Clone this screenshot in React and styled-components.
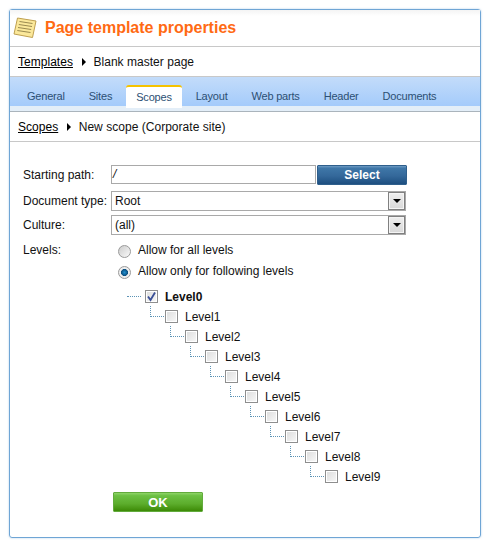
import React from 'react';
import styled, { createGlobalStyle } from 'styled-components';

const GlobalStyle = createGlobalStyle`
  html, body {
    margin: 0;
    padding: 0;
    background: #fff;
  }
  body {
    font-family: "Liberation Sans", Arial, sans-serif;
    font-size: 12px;
    color: #111;
  }
`;

const Page = styled.div`
  width: 490px;
  height: 547px;
  padding: 9px;
  box-sizing: border-box;
`;

const Frame = styled.div`
  width: 472px;
  height: 529px;
  box-sizing: border-box;
  border: 1px solid #6fa5d5;
  border-radius: 3px;
  box-shadow: 0 0 2px rgba(111, 165, 213, 0.6);
  display: flex;
  flex-direction: column;
`;

const TitleBar = styled.div`
  height: 37px;
  box-sizing: border-box;
  display: flex;
  align-items: center;
  gap: 8px;
  padding-left: 3px;
  border-bottom: 1px solid #c8c8c8;
  background: linear-gradient(#f4f4f4 0, #fff 6px);
`;

const Title = styled.h1`
  margin: 0;
  font-size: 16px;
  font-weight: bold;
  color: #ff6a13;
`;

const Crumbs = styled.div`
  height: 30px;
  box-sizing: border-box;
  display: flex;
  align-items: center;
  padding-left: 8px;
  font-size: 12px;
  letter-spacing: 0.03px;
  border-bottom: 1px solid #c8c8c8;
`;

const CrumbLink = styled.a`
  color: #000;
  text-decoration: underline;
`;

const CrumbArrow = styled.span`
  width: 0;
  height: 0;
  margin: 0 7.5px 0 9px;
  border-left: 4px solid #000;
  border-top: 4px solid transparent;
  border-bottom: 4px solid transparent;
`;

const TabBar = styled.div`
  height: 35px;
  box-sizing: border-box;
  border-bottom: 1px solid #aab4bc;
  background: linear-gradient(#e3eef8, #e3eef8) bottom / 100% 5px no-repeat,
    linear-gradient(#c3dcfa, #a4cbfb) top / 100% 29px no-repeat;
  display: flex;
  align-items: flex-start;
  padding: 8px 0 0 5px;
`;

const Tab = styled.div`
  height: 23px;
  box-sizing: border-box;
  padding: 0 ${p => (p.$active ? 10 : 12)}px 2px;
  margin: 0 ${p => (p.$active ? 2 : 0)}px;
  display: flex;
  align-items: center;
  font-size: 11px;
  letter-spacing: -0.2px;
  color: #2c4f73;
  ${p => p.$active && `
    background: #fff;
    border-top: 2px solid #f5c200;
    border-radius: 3px 3px 0 0;
  `}
`;

const Form = styled.div`
  padding: 23px 0 0 13px;
  flex: 1;
  display: flex;
  flex-direction: column;
`;

const Row = styled.div`
  display: flex;
  align-items: flex-start;
  margin-bottom: ${p => p.$gap ?? 4}px;
`;

const Label = styled.label`
  width: 88px;
  flex: none;
  line-height: ${p => p.$line ?? 20}px;
  font-size: 12px;
`;

const TextBox = styled.div`
  width: 205px;
  height: 19px;
  box-sizing: border-box;
  border: 1px solid #a9a9a9;
  padding-left: 1px;
  line-height: 17px;
  font-size: 12px;
  font-style: italic;
`;

const SelectButton = styled.button`
  width: 90px;
  height: 20px;
  margin-left: 1px;
  padding: 0;
  border: 1px solid #2f5f8c;
  border-radius: 1px;
  background: linear-gradient(#6f9cc4 0, #3f77a8 12%, #34689a 55%, #1d4f80 100%);
  color: #fff;
  font: bold 12px "Liberation Sans", Arial, sans-serif;
`;

const Dropdown = styled.div`
  width: 295px;
  height: 20px;
  box-sizing: border-box;
  border: 1px solid #a9a9a9;
  padding-left: 3px;
  display: flex;
  align-items: center;
  justify-content: space-between;
  font-size: 12px;
`;

const DropButton = styled.span`
  width: 17px;
  height: 18px;
  box-sizing: border-box;
  border: 1px solid #808080;
  box-shadow: inset 0 0 0 1px #f4f4f4;
  background: linear-gradient(#eeeeee, #d8d8d8);
  display: flex;
  align-items: center;
  justify-content: center;
  &::after {
    content: "";
    border-top: 4px solid #000;
    border-left: 4px solid transparent;
    border-right: 4px solid transparent;
  }
`;

const RadioGroup = styled.div`
  display: flex;
  flex-direction: column;
  gap: 7px;
  padding: 5px 0 0 7px;
`;

const RadioRow = styled.div`
  display: flex;
  align-items: center;
  gap: 7px;
  height: 14px;
  & > span:last-child {
    margin-top: -2px;
  }
`;

const RadioDot = styled.span`
  width: 13px;
  height: 13px;
  box-sizing: border-box;
  border-radius: 50%;
  border: 1px solid #9a9a9a;
  background: ${p => (p.$on
    ? 'radial-gradient(circle, #1f8fd0 0, #0b4f80 3.2px, #eeeeee 3.8px)'
    : 'linear-gradient(135deg, #cccccc, #fafafa)')};
`;

const Tree = styled.div`
  margin-top: 7px;
  padding-left: 104px;
`;

const TreeRow = styled.div`
  height: 20px;
  display: flex;
  align-items: center;
  padding-left: ${p => p.$level * 20}px;
`;

const Elbow = styled.span`
  width: 14px;
  height: 11px;
  box-sizing: border-box;
  align-self: flex-start;
  margin-left: 3px;
  margin-right: 1px;
  border-left: 1px dotted #5c93b5;
  border-bottom: 1px dotted #5c93b5;
`;

const Stub = styled.span`
  width: 14px;
  margin-right: 4px;
  border-bottom: 1px dotted #5c93b5;
`;

const Check = styled.span`
  width: 13px;
  height: 13px;
  box-sizing: border-box;
  border: 1px solid #8e8e8e;
  box-shadow: inset 0 0 0 1px #fff;
  background: linear-gradient(135deg, #dcdcdc, #f8f8f8);
  display: flex;
`;

const TreeLabel = styled.span`
  margin-left: 7px;
  padding-top: 2px;
  font-size: 12px;
  font-weight: ${p => (p.$bold ? 'bold' : 'normal')};
`;

const OkButton = styled.button`
  width: 90px;
  height: 20px;
  margin: 6px 0 0 90px;
  padding: 0;
  border: 1px solid #62ab3c;
  border-radius: 1px;
  background: linear-gradient(#8fd468 0, #6cc043 15%, #5cad2c 60%, #3c8a06 100%);
  color: #fff;
  font: bold 13px "Liberation Sans", Arial, sans-serif;
`;

const NoteIcon = () => (
  <svg width="24" height="22" viewBox="0 0 24 22">
    <path d="M4.5 1 L23 4 L19.5 20.5 L1 17 Z" fill="#fbe89a" stroke="#bfa050" strokeWidth="1" strokeLinejoin="round" />
    <path d="M6.5 4.5 L19.5 6.5 M5.8 7.5 L19 9.5 M5 10.5 L18.2 12.5 M4.3 13.5 L17.5 15.5" stroke="#9a8a50" strokeWidth="1" fill="none" />
  </svg>
);

const CheckMark = () => (
  <svg width="11" height="11" viewBox="0 0 11 11">
    <path d="M2 5.5 L4.5 9 L9 1.5" stroke="#3a4f96" strokeWidth="1.8" fill="none" />
  </svg>
);

const tabs = [
  ['General', false],
  ['Sites', false],
  ['Scopes', true],
  ['Layout', false],
  ['Web parts', false],
  ['Header', false],
  ['Documents', false],
];

const levels = [0, 1, 2, 3, 4, 5, 6, 7, 8, 9];

export default function App() {
  return (
    <>
      <GlobalStyle />
      <Page>
        <Frame>
          <TitleBar>
            <NoteIcon />
            <Title>Page template properties</Title>
          </TitleBar>
          <Crumbs>
            <CrumbLink>Templates</CrumbLink>
            <CrumbArrow />
            Blank master page
          </Crumbs>
          <TabBar>
            {tabs.map(([name, active]) => (
              <Tab key={name} $active={active}>{name}</Tab>
            ))}
          </TabBar>
          <Crumbs>
            <CrumbLink>Scopes</CrumbLink>
            <CrumbArrow />
            New scope (Corporate site)
          </Crumbs>
          <Form>
            <Row $gap={6}>
              <Label>Starting path:</Label>
              <TextBox>/</TextBox>
              <SelectButton>Select</SelectButton>
            </Row>
            <Row>
              <Label>Document type:</Label>
              <Dropdown>Root<DropButton /></Dropdown>
            </Row>
            <Row>
              <Label>Culture:</Label>
              <Dropdown>(all)<DropButton /></Dropdown>
            </Row>
            <Row $gap={0}>
              <Label $line={22}>Levels:</Label>
              <RadioGroup>
                <RadioRow><RadioDot /><span>Allow for all levels</span></RadioRow>
                <RadioRow><RadioDot $on /><span>Allow only for following levels</span></RadioRow>
              </RadioGroup>
            </Row>
            <Tree>
              {levels.map(level => (
                <TreeRow key={level} $level={level}>
                  {level === 0 ? <Stub /> : <Elbow />}
                  <Check>{level === 0 && <CheckMark />}</Check>
                  <TreeLabel $bold={level === 0}>Level{level}</TreeLabel>
                </TreeRow>
              ))}
            </Tree>
            <OkButton>OK</OkButton>
          </Form>
        </Frame>
      </Page>
    </>
  );
}
